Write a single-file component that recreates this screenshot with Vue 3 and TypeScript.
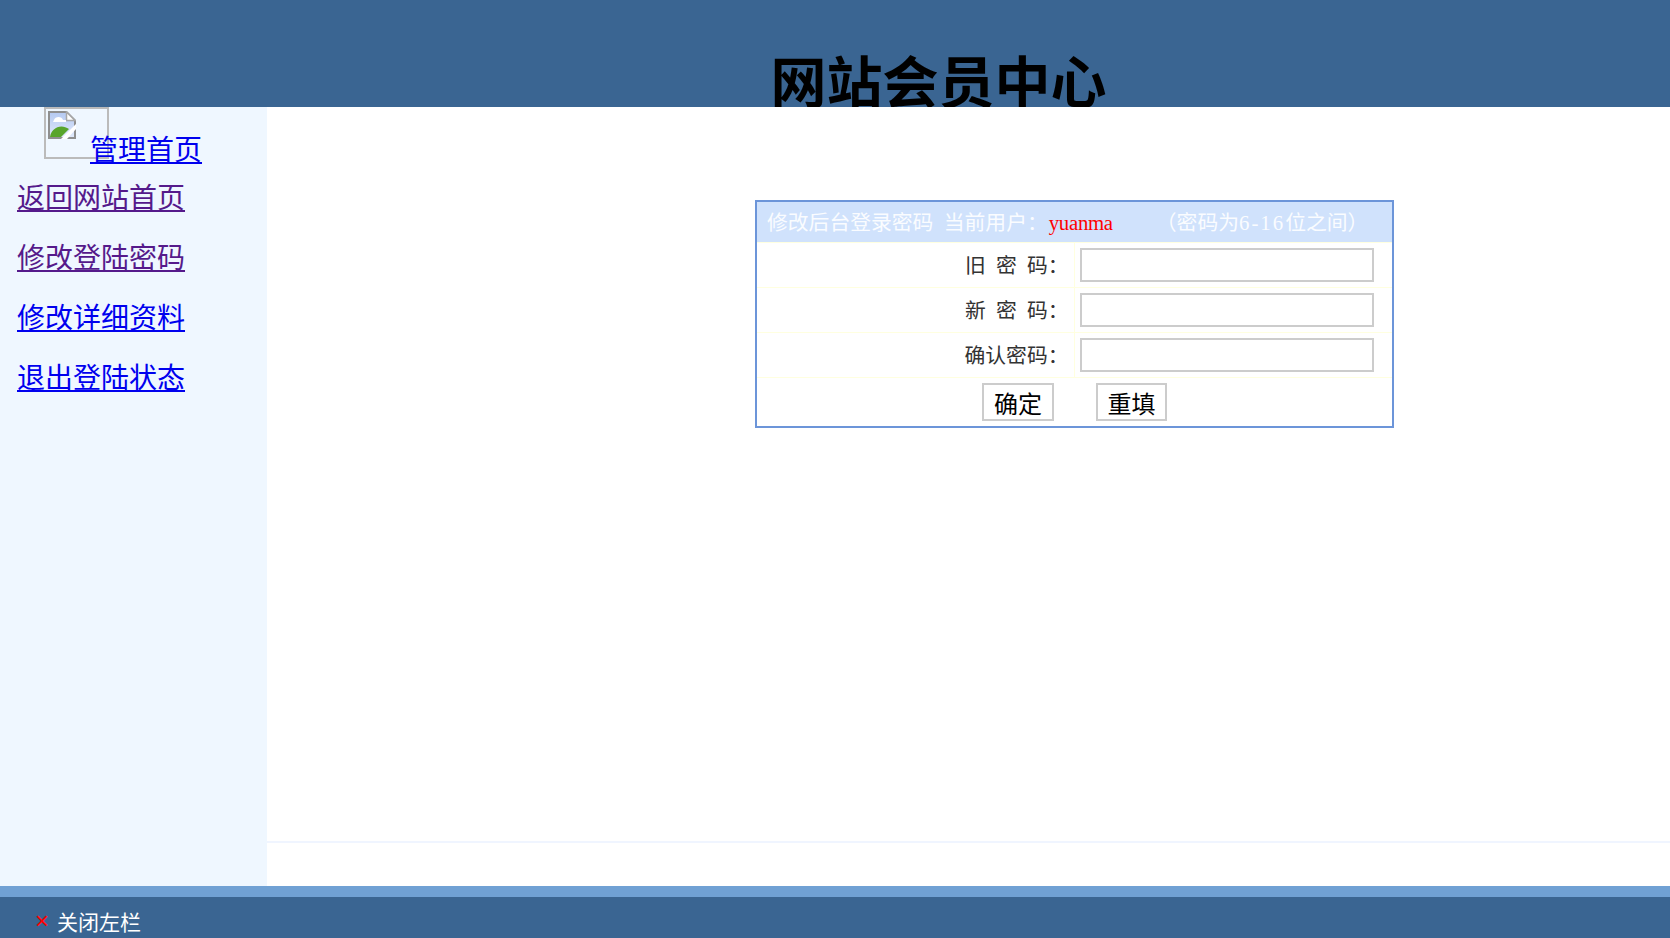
<script setup lang="ts">
const links: { text: string; visited: boolean }[] = [
  { text: '返回网站首页', visited: true },
  { text: '修改登陆密码', visited: true },
  { text: '修改详细资料', visited: false },
  { text: '退出登陆状态', visited: false },
]
const rows: { label: string; spaced: boolean }[] = [
  { label: '旧 密 码：', spaced: true },
  { label: '新 密 码：', spaced: true },
  { label: '确认密码：', spaced: false },
]
</script>

<template>
  <div class="page">
    <header class="top">
      <h1 class="title">网站会员中心</h1>
    </header>
    <div class="middle">
      <aside class="side">
        <div class="home">
          <span class="broken">
            <svg width="28" height="28" viewBox="0 0 28 28">
              <defs>
                <linearGradient id="sky" x1="0" y1="0" x2="0" y2="1">
                  <stop offset="0" stop-color="#b4c9f2" />
                  <stop offset="1" stop-color="#e2eafa" />
                </linearGradient>
              </defs>
              <path d="M1 1H18.5L27 9.5V27H1Z" fill="url(#sky)" stroke="#8f8f8f" stroke-width="2" />
              <path d="M18.5 1V9.5H27Z" fill="#fff" stroke="#a8a8a8" stroke-width="1.5" />
              <path d="M6 9c1-4 8-4 9 0h3v2H5z" fill="#fff" />
              <path d="M2 26c1-9 11-14 19-8l-8 8z" fill="#58a52b" />
              <path d="M13 28L28 13v5L19 28z" fill="#fff" />
            </svg>
          </span>
          <a class="link" href="#">管理首页</a>
        </div>
        <nav class="nav">
          <a v-for="l in links" :key="l.text" class="link" :class="{ visited: l.visited }" href="#">{{ l.text }}</a>
        </nav>
      </aside>
      <main class="main">
        <div class="content">
          <table class="form">
            <tbody>
              <tr class="head">
                <td colspan="2">
                  <span>修改后台登录密码&nbsp;&nbsp;当前用户：</span><span class="user">yuanma</span><span class="hint">（密码为<span class="digits">6-16</span>位之间）</span>
                </td>
              </tr>
              <tr v-for="r in rows" :key="r.label" class="row">
                <td class="label"><span :class="{ spaced: r.spaced }">{{ r.label }}</span></td>
                <td class="field"><input class="input" type="password" /></td>
              </tr>
              <tr class="actions">
                <td colspan="2">
                  <div class="btns">
                    <button class="btn" type="button">确定</button>
                    <button class="btn" type="button">重填</button>
                  </div>
                </td>
              </tr>
            </tbody>
          </table>
        </div>
        <div class="rule"></div>
      </main>
    </div>
    <div class="band"></div>
    <footer class="bottom">
      <span class="x">×</span>
      <span class="close">关闭左栏</span>
    </footer>
  </div>
</template>

<style>
html, body { margin: 0; padding: 0; background: #fff; }
</style>

<style scoped>
.page {
  width: 1670px;
  height: 938px;
  display: flex;
  flex-direction: column;
  overflow: hidden;
  font-family: "Liberation Serif", "Noto Sans CJK SC", serif;
}
.top {
  height: 107px;
  flex: none;
  background: #3a6592;
  overflow: hidden;
  text-align: center;
  padding-left: 207px;
  box-sizing: border-box;
}
.title {
  margin: 43px 0 0;
  font: bold 56px/72px "Noto Sans CJK SC", sans-serif;
  color: #000;
}
.middle { height: 779px; flex: none; display: flex; }
.side {
  width: 267px;
  flex: none;
  background: #eff7ff;
  box-sizing: border-box;
}
.home { height: 62px; padding-left: 44px; display: flex; align-items: flex-end; }
.broken {
  width: 65px;
  height: 52px;
  box-sizing: border-box;
  border: 2px solid #bbb;
  display: block;
  margin-right: -19px;
  align-self: flex-start;
}
.broken svg { display: block; margin: 2px; }
.link { font-size: 28px; line-height: 36px; color: #00e; text-decoration: underline; }
.link.visited { color: #551a8b; }
.nav {
  padding-left: 17px;
  display: flex;
  flex-direction: column;
  align-items: flex-start;
  gap: 24px;
  padding-top: 12px;
}
.main { flex: 1; display: flex; flex-direction: column; background: #fff; }
.content { height: 734px; padding: 93px 0 0 488px; box-sizing: border-box; }
.rule { height: 2px; background: #f0f5ff; }
.form {
  width: 639px;
  border: 2px solid #6c95d9;
  border-collapse: separate;
  border-spacing: 0;
  font-size: 20.8px;
  table-layout: fixed;
}
.head td {
  height: 41px;
  background: #d0e2fc;
  border-bottom: 1px solid #ffffe0;
  color: #fafcff;
  padding: 0 0 3px 10px;
  box-sizing: border-box;
  white-space: nowrap;
  font-size: 20.8px;
}
.user { color: #f00; margin-right: 43px; margin-left: 1px; letter-spacing: -0.3px; }
.digits { letter-spacing: 2px; }
.row td { border-bottom: 1px solid #ffffe0; height: 45px; box-sizing: border-box; padding: 0; color: #333; font-size: 20.8px; }
.label { width: 317px; text-align: right; border-right: 1px solid #ffffe0; padding: 0 5px 3px 0 !important; }
.spaced { word-spacing: 5px; }
.field { padding-left: 5px !important; }
.input {
  display: block;
  width: 294px;
  height: 34px;
  box-sizing: border-box;
  border: 2px solid #ccc;
  background: #fff;
  padding: 0;
  outline: none;
}
.actions td { padding: 5px 0; height: 48px; box-sizing: border-box; }
.btns { display: flex; gap: 42px; padding-left: 225px; }
.btn {
  width: 72px;
  height: 38px;
  background: #fff;
  border: 2px solid #ccc;
  font: 24px "Liberation Serif", "Noto Sans CJK SC", serif;
  color: #000;
  padding: 0;
}
.btn + .btn { width: 71px; }
.band { height: 11px; flex: none; background: #70a1d4; }
.bottom {
  flex: 1;
  background: #3a6592;
  display: flex;
  align-items: center;
  padding: 7px 0 0 35px;
  box-sizing: border-box;
  color: #fff;
}
.x { color: #f00; font: 24px "Liberation Sans", sans-serif; width: 22px; }
.close { font-size: 21px; }
</style>
